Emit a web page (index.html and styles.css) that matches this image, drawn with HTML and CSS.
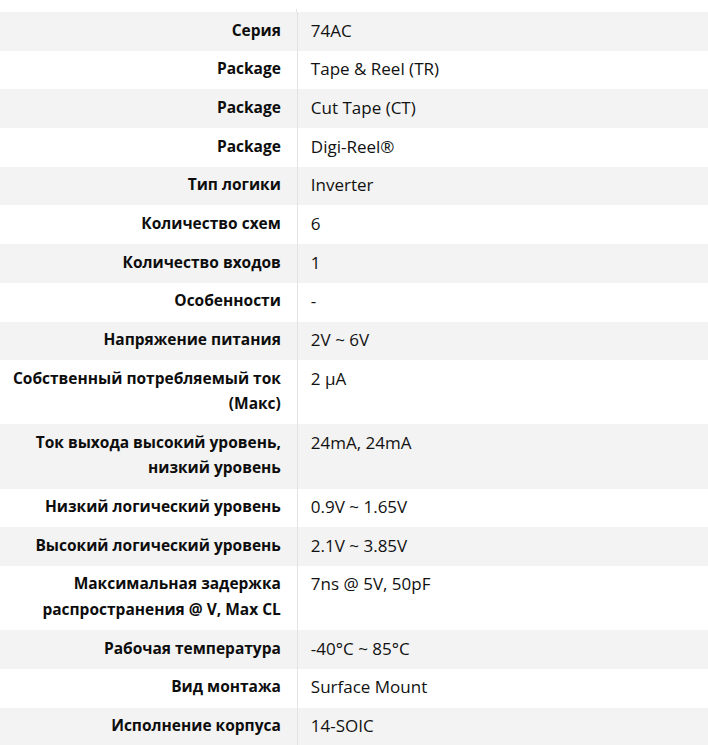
FILE: index.html
```html
<!DOCTYPE html>
<html lang="ru">
<head>
<meta charset="utf-8">
<title>Характеристики</title>
<link rel="stylesheet" href="styles.css">
</head>
<body>
<div class="specs-wrap">
<table class="specs">
<tbody>
<tr><th>Серия</th><td>74AC</td></tr>
<tr><th>Package</th><td>Tape &amp; Reel (TR)</td></tr>
<tr><th>Package</th><td>Cut Tape (CT)</td></tr>
<tr><th>Package</th><td>Digi-Reel®</td></tr>
<tr><th>Тип логики</th><td>Inverter</td></tr>
<tr><th>Количество схем</th><td>6</td></tr>
<tr><th>Количество входов</th><td>1</td></tr>
<tr><th>Особенности</th><td>-</td></tr>
<tr><th>Напряжение питания</th><td>2V ~ 6V</td></tr>
<tr><th>Собственный потребляемый ток (Макс)</th><td>2 µA</td></tr>
<tr><th>Ток выхода высокий уровень, низкий уровень</th><td>24mA, 24mA</td></tr>
<tr><th>Низкий логический уровень</th><td>0.9V ~ 1.65V</td></tr>
<tr><th>Высокий логический уровень</th><td>2.1V ~ 3.85V</td></tr>
<tr><th>Максимальная задержка распространения @ V, Max CL</th><td>7ns @ 5V, 50pF</td></tr>
<tr><th>Рабочая температура</th><td>-40°C ~ 85°C</td></tr>
<tr><th>Вид монтажа</th><td>Surface Mount</td></tr>
<tr><th>Исполнение корпуса</th><td>14-SOIC</td></tr>
</tbody>
</table>
</div>
</body>
</html>
```
FILE: styles.css
```css
html, body {
  margin: 0;
  padding: 0;
  background: #ffffff;
}

body {
  padding-top: 9px;
  font-family: "Open Sans", "Noto Sans", sans-serif;
  color: #111111;
}

.specs-wrap {
  padding-top: 3px;
  background: linear-gradient(to right, transparent calc(42% - 1px), #e3e3e3 calc(42% - 1px), #e3e3e3 42%, transparent 42%) no-repeat 0 0 / 100% 3px;
}

.specs {
  width: 100%;
  border-collapse: collapse;
  table-layout: fixed;
}

.specs tr:nth-child(odd) {
  background: #f3f3f3;
}

.specs th,
.specs td {
  padding: 5.5px 0 7.7px;
  line-height: 25.5px;
  vertical-align: top;
}

.specs th {
  width: 42%;
  box-sizing: border-box;
  padding-left: 8px;
  padding-right: 16px;
  text-align: right;
  font-size: 15.5px;
  font-weight: 700;
  color: #0d0d0d;
  border-right: 1px solid #e3e3e3;
}

.specs td {
  padding-left: 13px;
  padding-right: 12px;
  text-align: left;
  font-size: 17px;
  font-weight: 400;
}
```
